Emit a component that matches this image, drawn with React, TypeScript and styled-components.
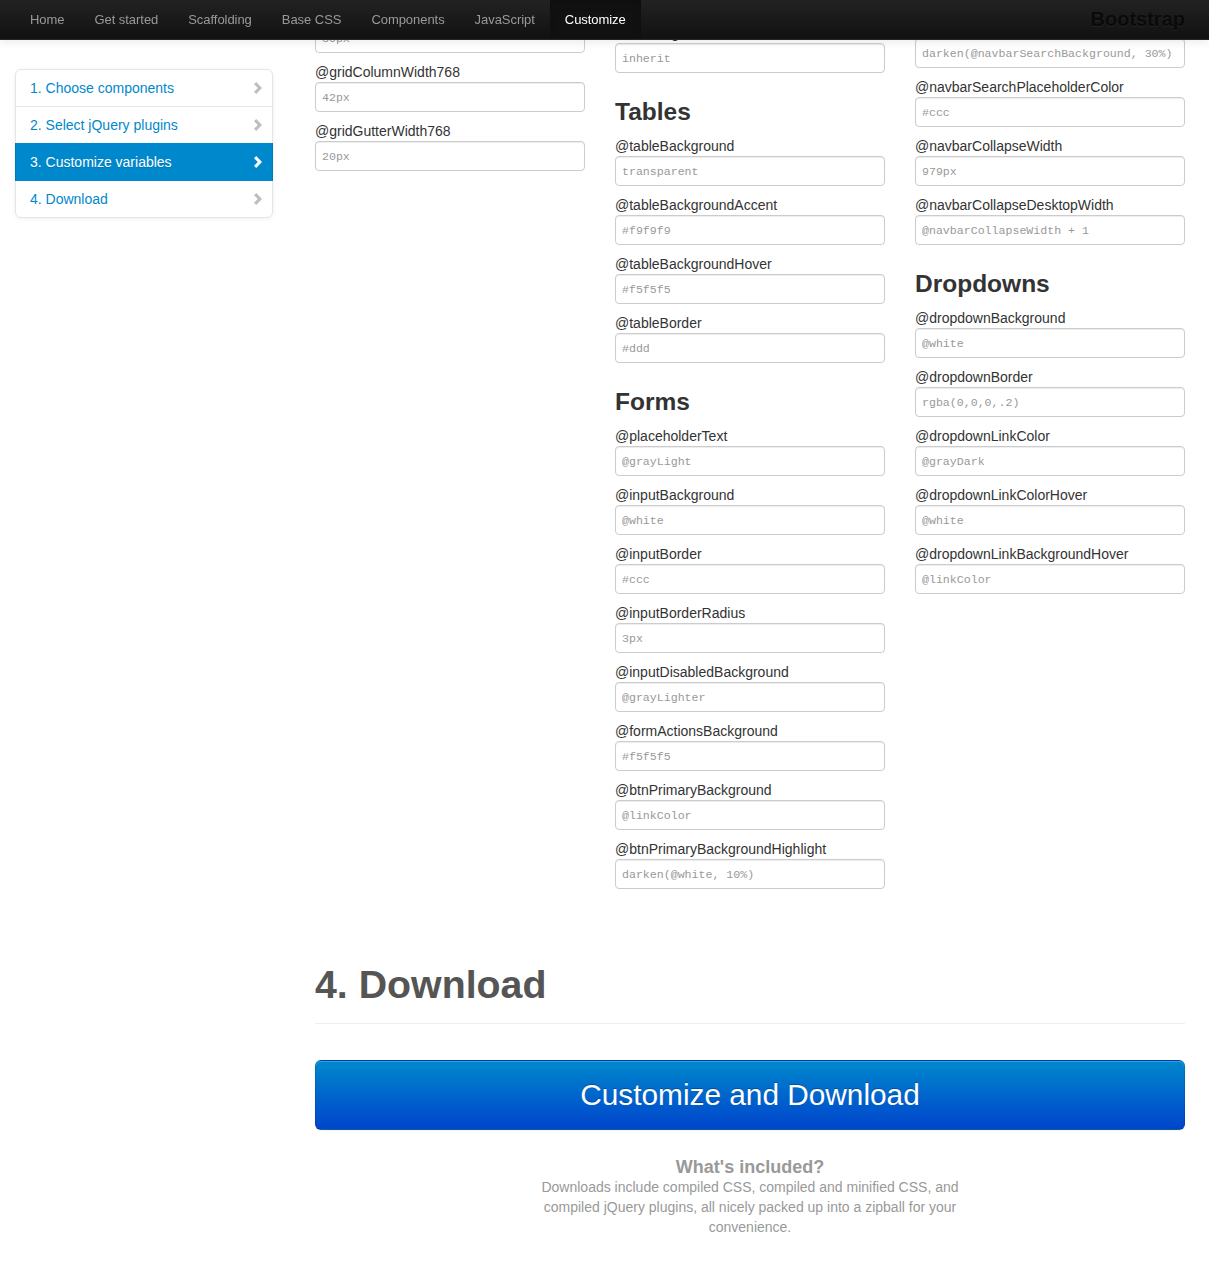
import React from "react";
import styled, { createGlobalStyle } from "styled-components";

const GlobalStyle = createGlobalStyle`
  html, body { margin: 0; padding: 0; background: #fff; }
  body {
    font-family: "Liberation Sans", Arial, Helvetica, sans-serif;
    font-size: 14px;
    line-height: 20px;
    color: #333;
  }
  *, *::before, *::after { box-sizing: border-box; }
`;

/* ---------- Top navbar (fixed, overlays the scrolled page) ---------- */

const Navbar = styled.header`
  position: fixed;
  top: 0;
  left: 0;
  right: 0;
  z-index: 1030;
  height: 40px;
  background-color: #1b1b1b;
  background-image: linear-gradient(to bottom, #222222, #111111);
  border-bottom: 1px solid #252525;
  box-shadow: 0 1px 10px rgba(0, 0, 0, 0.1);
`;

const NavContainer = styled.div`
  width: 1170px;
  margin-left: 15px;
  height: 39px;
  display: flex;
  align-items: stretch;
  justify-content: space-between;
`;

const NavList = styled.ul`
  list-style: none;
  margin: 0;
  padding: 0;
  display: flex;
`;

const NavLink = styled.a<{ $active?: boolean }>`
  display: block;
  padding: 10px 15px 9px;
  font-size: 13px;
  letter-spacing: -0.05px;
  line-height: 20px;
  text-decoration: none;
  color: ${(p) => (p.$active ? "#fff" : "#999")};
  background-color: ${(p) => (p.$active ? "#111" : "transparent")};
  box-shadow: ${(p) => (p.$active ? "inset 0 3px 8px rgba(0,0,0,0.125)" : "none")};
`;

const Brand = styled.a`
  display: block;
  padding: 9px 0 10px;
  font-size: 20px;
  font-weight: bold;
  line-height: 20px;
  color: #0a0a0a;
  text-decoration: none;
  text-shadow: 0 1px 0 rgba(255, 255, 255, 0.06);
`;

/* ---------- Page layout ---------- */

const Page = styled.div`
  width: 1170px;
  margin-left: 15px;
  display: grid;
  grid-template-columns: 270px 870px;
  column-gap: 30px;
  padding-bottom: 40px;
`;

const Sidebar = styled.aside`
  padding-top: 69px;
`;

const SideNav = styled.ul`
  width: 258px;
  list-style: none;
  margin: 0;
  padding: 0;
  background: #fff;
  border-radius: 6px;
  box-shadow: 0 1px 4px rgba(0, 0, 0, 0.065);
`;

const SideLink = styled.a<{ $active?: boolean; $first?: boolean; $last?: boolean }>`
  position: relative;
  display: flex;
  align-items: center;
  justify-content: space-between;
  margin-bottom: -1px;
  padding: ${(p) => (p.$active ? "9px 15px" : "8px 14px")};
  border: ${(p) => (p.$active ? "0" : "1px solid #e5e5e5")};
  border-radius: ${(p) =>
    p.$first ? "6px 6px 0 0" : p.$last ? "0 0 6px 6px" : "0"};
  font-size: 14px;
  line-height: 20px;
  text-decoration: none;
  color: ${(p) => (p.$active ? "#fff" : "#0088cc")};
  background-color: ${(p) => (p.$active ? "#0088cc" : "transparent")};
  text-shadow: ${(p) => (p.$active ? "0 1px 0 rgba(0,0,0,0.15)" : "none")};
  box-shadow: ${(p) =>
    p.$active
      ? "inset 1px 0 0 rgba(0,0,0,0.1), inset -1px 0 0 rgba(0,0,0,0.1)"
      : "none"};
  z-index: ${(p) => (p.$active ? 2 : 1)};
`;

const ChevronIcon = styled.svg<{ $active?: boolean }>`
  flex: none;
  width: 14px;
  height: 14px;
  margin-right: -6px;
  fill: ${(p) => (p.$active ? "#fff" : "#000")};
  opacity: ${(p) => (p.$active ? 1 : 0.25)};
`;

const Chevron = ({ active }: { active?: boolean }) => (
  <ChevronIcon $active={active} viewBox="0 0 14 14" aria-hidden="true">
    <polygon points="4,3.2 6.2,1 12,7 6.2,13 4,10.8 7.8,7" />
  </ChevronIcon>
);

const Main = styled.main``;

/* ---------- Variables ---------- */

const VarRow = styled.div`
  display: grid;
  grid-template-columns: repeat(3, 270px);
  column-gap: 30px;
  align-items: start;
`;

const VarColumn = styled.div<{ $lead: number }>`
  display: flex;
  flex-direction: column;
  padding-top: ${(p) => p.$lead}px;
`;

const GroupTitle = styled.h3`
  margin: 11px 0 3px;
  font-size: 24.5px;
  line-height: 40px;
  font-weight: bold;
  color: #333;
`;

const VarLabel = styled.label`
  display: block;
  height: 21px;
  padding-top: 1px;
  font-size: 14px;
  line-height: 20px;
  color: #333;
`;

const VarInput = styled.input`
  display: block;
  width: 270px;
  height: 30px;
  margin: 0 0 8px;
  padding: 4px 6px;
  border: 1px solid #ccc;
  border-radius: 4px;
  background: #fff;
  box-shadow: inset 0 1px 1px rgba(0, 0, 0, 0.075);
  font-family: "Liberation Mono", "Courier New", monospace;
  font-size: 11.6px;
  line-height: 20px;
  color: #555;
  outline: none;
  &::placeholder {
    color: #999;
    opacity: 1;
  }
`;

/* ---------- Download ---------- */

const DownloadSection = styled.section`
  padding-top: 67px;
`;

const PageHeader = styled.div`
  padding-bottom: 9px;
  border-bottom: 1px solid #eee;
`;

const SectionTitle = styled.h1`
  margin: 0 0 10px;
  font-size: 39.3px;
  line-height: 40px;
  font-weight: bold;
  color: #555;
`;

const DownloadButton = styled.button`
  display: block;
  width: 100%;
  margin: 36px 0 27px;
  padding: 19px 24px;
  font-family: inherit;
  font-size: 29.8px;
  line-height: 30px;
  color: #fff;
  text-align: center;
  text-shadow: 0 -1px 0 rgba(0, 0, 0, 0.25);
  background-color: #006dcc;
  background-image: linear-gradient(to bottom, #0088cc, #0044cc);
  border: 1px solid;
  border-color: rgba(0, 0, 0, 0.1) rgba(0, 0, 0, 0.1) rgba(0, 0, 0, 0.25);
  border-radius: 6px;
  box-shadow: inset 0 1px 0 rgba(255, 255, 255, 0.2), 0 1px 2px rgba(0, 0, 0, 0.05);
  cursor: pointer;
`;

const IncludedTitle = styled.h4`
  margin: 0;
  font-size: 18px;
  line-height: 20px;
  font-weight: bold;
  color: #999;
  text-align: center;
`;

const IncludedText = styled.p`
  width: 435px;
  margin: 0 auto;
  font-size: 14px;
  line-height: 20px;
  color: #999;
  text-align: center;
`;

type Item =
  | { kind: "var"; name: string; value: string; covered?: boolean }
  | { kind: "title"; text: string };

const v = (name: string, value: string, covered?: boolean): Item => ({
  kind: "var",
  name,
  value,
  covered,
});
const t = (text: string): Item => ({ kind: "title", text });

/* The page is scrolled: the first entry of each column sits partly under the navbar. */
const columns: { lead: number; items: Item[] }[] = [
  {
    lead: 2,
    items: [
      v("@gridGutterWidth1200", "30px", true),
      v("@gridColumnWidth768", "42px"),
      v("@gridGutterWidth768", "20px"),
    ],
  },
  {
    lead: 22,
    items: [
      v("@headingsColor", "inherit"),
      t("Tables"),
      v("@tableBackground", "transparent"),
      v("@tableBackgroundAccent", "#f9f9f9"),
      v("@tableBackgroundHover", "#f5f5f5"),
      v("@tableBorder", "#ddd"),
      t("Forms"),
      v("@placeholderText", "@grayLight"),
      v("@inputBackground", "@white"),
      v("@inputBorder", "#ccc"),
      v("@inputBorderRadius", "3px"),
      v("@inputDisabledBackground", "@grayLighter"),
      v("@formActionsBackground", "#f5f5f5"),
      v("@btnPrimaryBackground", "@linkColor"),
      v("@btnPrimaryBackgroundHighlight", "darken(@white, 10%)"),
    ],
  },
  {
    lead: 17,
    items: [
      v("@navbarSearchBorder", "darken(@navbarSearchBackground, 30%)"),
      v("@navbarSearchPlaceholderColor", "#ccc"),
      v("@navbarCollapseWidth", "979px"),
      v("@navbarCollapseDesktopWidth", "@navbarCollapseWidth + 1"),
      t("Dropdowns"),
      v("@dropdownBackground", "@white"),
      v("@dropdownBorder", "rgba(0,0,0,.2)"),
      v("@dropdownLinkColor", "@grayDark"),
      v("@dropdownLinkColorHover", "@white"),
      v("@dropdownLinkBackgroundHover", "@linkColor"),
    ],
  },
];

const navItems = [
  "Home",
  "Get started",
  "Scaffolding",
  "Base CSS",
  "Components",
  "JavaScript",
  "Customize",
];

const steps = [
  "1. Choose components",
  "2. Select jQuery plugins",
  "3. Customize variables",
  "4. Download",
];

export default function App() {
  return (
    <>
      <GlobalStyle />
      <Navbar>
        <NavContainer>
          <NavList>
            {navItems.map((n) => (
              <li key={n}>
                <NavLink href="#" $active={n === "Customize"}>
                  {n}
                </NavLink>
              </li>
            ))}
          </NavList>
          <Brand href="#">Bootstrap</Brand>
        </NavContainer>
      </Navbar>

      <Page>
        <Sidebar>
          <SideNav>
            {steps.map((s, i) => {
              const active = i === 2;
              return (
                <li key={s}>
                  <SideLink
                    href="#"
                    $active={active}
                    $first={i === 0}
                    $last={i === steps.length - 1}
                  >
                    <span>{s}</span>
                    <Chevron active={active} />
                  </SideLink>
                </li>
              );
            })}
          </SideNav>
        </Sidebar>

        <Main>
          <VarRow>
            {columns.map((col, ci) => (
              <VarColumn key={ci} $lead={col.lead}>
                {col.items.map((it, ii) =>
                  it.kind === "title" ? (
                    <GroupTitle key={ii}>{it.text}</GroupTitle>
                  ) : (
                    <React.Fragment key={ii}>
                      <VarLabel aria-hidden={it.covered}>
                        {it.covered ? "" : it.name}
                      </VarLabel>
                      <VarInput
                        type="text"
                        aria-label={it.name}
                        placeholder={it.value}
                      />
                    </React.Fragment>
                  )
                )}
              </VarColumn>
            ))}
          </VarRow>

          <DownloadSection>
            <PageHeader>
              <SectionTitle>4. Download</SectionTitle>
            </PageHeader>
            <DownloadButton type="button">Customize and Download</DownloadButton>
            <IncludedTitle>What's included?</IncludedTitle>
            <IncludedText>
              Downloads include compiled CSS, compiled and minified CSS, and
              compiled jQuery plugins, all nicely packed up into a zipball for
              your convenience.
            </IncludedText>
          </DownloadSection>
        </Main>
      </Page>
    </>
  );
}
